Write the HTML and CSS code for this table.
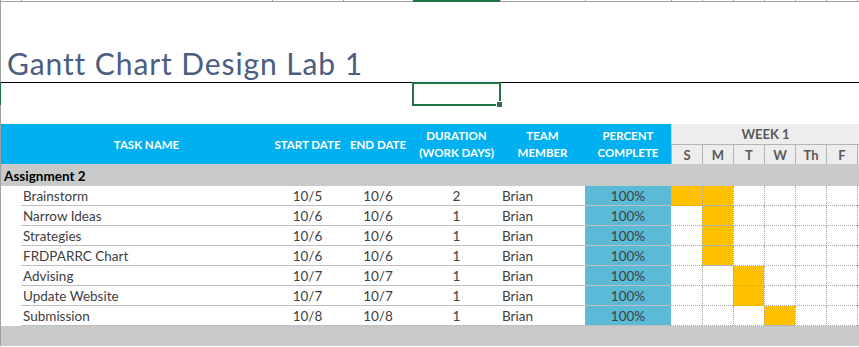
FILE: index.html
```html
<!DOCTYPE html>
<html>
<head>
<meta charset="utf-8">
<link rel="stylesheet" href="styles.css">
</head>
<body>
<div class="sheet">
  <div class="row colhdr grid">
    <span class="ch ch-first"></span><span class="ch"></span><span class="ch"></span><span class="ch"></span><span class="ch ch-sel"></span><span class="ch"></span><span class="ch"></span><span class="ch"></span><span class="ch"></span><span class="ch"></span><span class="ch"></span><span class="ch"></span><span class="ch"></span><span class="ch"></span>
  </div>
  <div class="row title-row"><h1 class="title">Gantt Chart Design Lab 1</h1></div>
  <div class="row sel-row"><div class="selection"><span class="handle"></span></div></div>
  <div class="row blank-row"></div>
  <div class="row table grid">
    <div class="th"></div>
    <div class="th">TASK NAME</div>
    <div class="th">START DATE</div>
    <div class="th">END DATE</div>
    <div class="th">DURATION<br>(WORK DAYS)</div>
    <div class="th">TEAM<br>MEMBER</div>
    <div class="th">PERCENT<br>COMPLETE</div>
    <div class="week">WEEK 1</div>
    <div class="day">S</div><div class="day">M</div><div class="day">T</div><div class="day">W</div><div class="day">Th</div><div class="day">F</div><div class="day"></div>

    <div class="group">Assignment 2</div>

    <div class="td a"></div><div class="td name">Brainstorm</div><div class="td c">10/5</div><div class="td c">10/6</div><div class="td c">2</div><div class="td member">Brian</div><div class="td c pct">100%</div>
    <div class="g s on"></div><div class="g on"></div><div class="g"></div><div class="g"></div><div class="g"></div><div class="g"></div><div class="g"></div>

    <div class="td a"></div><div class="td name">Narrow Ideas</div><div class="td c">10/6</div><div class="td c">10/6</div><div class="td c">1</div><div class="td member">Brian</div><div class="td c pct">100%</div>
    <div class="g s"></div><div class="g on"></div><div class="g"></div><div class="g"></div><div class="g"></div><div class="g"></div><div class="g"></div>

    <div class="td a"></div><div class="td name">Strategies</div><div class="td c">10/6</div><div class="td c">10/6</div><div class="td c">1</div><div class="td member">Brian</div><div class="td c pct">100%</div>
    <div class="g s"></div><div class="g on"></div><div class="g"></div><div class="g"></div><div class="g"></div><div class="g"></div><div class="g"></div>

    <div class="td a"></div><div class="td name">FRDPARRC Chart</div><div class="td c">10/6</div><div class="td c">10/6</div><div class="td c">1</div><div class="td member">Brian</div><div class="td c pct">100%</div>
    <div class="g s"></div><div class="g on"></div><div class="g"></div><div class="g"></div><div class="g"></div><div class="g"></div><div class="g"></div>

    <div class="td a"></div><div class="td name">Advising</div><div class="td c">10/7</div><div class="td c">10/7</div><div class="td c">1</div><div class="td member">Brian</div><div class="td c pct">100%</div>
    <div class="g s"></div><div class="g"></div><div class="g on"></div><div class="g"></div><div class="g"></div><div class="g"></div><div class="g"></div>

    <div class="td a"></div><div class="td name">Update Website</div><div class="td c">10/7</div><div class="td c">10/7</div><div class="td c">1</div><div class="td member">Brian</div><div class="td c pct">100%</div>
    <div class="g s"></div><div class="g"></div><div class="g on"></div><div class="g"></div><div class="g"></div><div class="g"></div><div class="g"></div>

    <div class="td a"></div><div class="td name">Submission</div><div class="td c">10/8</div><div class="td c">10/8</div><div class="td c">1</div><div class="td member">Brian</div><div class="td c pct">100%</div>
    <div class="g s"></div><div class="g"></div><div class="g"></div><div class="g on"></div><div class="g"></div><div class="g"></div><div class="g"></div>
  </div>
  <div class="row footer-row"></div>
</div>
</body>
</html>
```
FILE: styles.css
```css
html, body {
  margin: 0;
  padding: 0;
  background: #ffffff;
}

.sheet {
  width: 859px;
  height: 347px;
  overflow: hidden;
  font-family: Lato, "Open Sans", sans-serif;
}

.row {
  border-left: 1px solid #a0a0a0;
}

.grid {
  display: grid;
  grid-template-columns: 20px 251px 71px 70px 87px 85px 86px repeat(6, 31px) 1fr;
}

/* column header strip */
.colhdr {
  height: 2px;
}
.ch {
  height: 2px;
  box-sizing: border-box;
  border-bottom: 1px solid #9f9f9f;
  border-left: 1px solid #9f9f9f;
}
.ch-first {
  border-left: 0;
}
.ch-sel {
  border: 0;
  background: #217346;
}

/* title */
.title-row {
  height: 80px;
  border-bottom: 1px solid #000000;
  display: flex;
  align-items: flex-end;
  padding-left: 6px;
}
.title {
  margin: 0;
  padding-bottom: 1px;
  font-family: Lato, "Open Sans", sans-serif;
  font-weight: 400;
  font-size: 30px;
  letter-spacing: 0.9px;
  line-height: 36px;
  color: #4b5d80;
}

/* selected row */
.sel-row {
  height: 23px;
  border-left-color: #217346;
}
.selection {
  position: relative;
  margin-left: 411px;
  margin-top: -1px;
  width: 89px;
  height: 24px;
  box-sizing: border-box;
  border: 2px solid #217346;
}
.handle {
  position: absolute;
  right: -4px;
  bottom: -4px;
  width: 7px;
  height: 7px;
  box-sizing: border-box;
  background: #217346;
  border: 1px solid #ffffff;
}

.blank-row {
  height: 19px;
}

/* table header */
.th {
  grid-row: span 2;
  background: #00b0f0;
  color: #ffffff;
  font-weight: 700;
  font-size: 11.5px;
  line-height: 17px;
  text-align: center;
  display: flex;
  align-items: center;
  justify-content: center;
  white-space: nowrap;
}
.week {
  grid-column: 8 / -1;
  height: 21px;
  box-sizing: border-box;
  background: #ededed;
  border-bottom: 1px solid #b4b4b4;
  border-left: 1px solid #d4d4d4;
  color: #595959;
  font-weight: 700;
  font-size: 13px;
  line-height: 20px;
  text-align: center;
}
.day {
  height: 19px;
  box-sizing: border-box;
  background: #ededed;
  border-left: 1px solid #b4b4b4;
  color: #595959;
  font-weight: 700;
  font-size: 13px;
  line-height: 21px;
  text-align: center;
}

/* group row */
.group {
  grid-column: 1 / -1;
  height: 22px;
  box-sizing: border-box;
  padding-top: 2px;
  background: #c9c9c9;
  color: #000000;
  font-weight: 700;
  font-size: 13.5px;
  line-height: 20px;
  padding-left: 3px;
}

/* data rows */
.td {
  height: 20px;
  box-sizing: border-box;
  border-bottom: 1px solid #bfbfbf;
  padding-top: 2px;
  font-size: 13.5px;
  line-height: 17px;
  color: #404040;
  white-space: nowrap;
}
.td.a {
  border-bottom: 0;
}
.name {
  padding-left: 2px;
}
.member {
  padding-left: 2px;
}
.c {
  text-align: center;
}
.pct {
  background: #5bbad5;
}
.g {
  height: 20px;
  box-sizing: border-box;
  border-bottom: 1px dotted #a6a6a6;
  border-left: 1px dotted #a6a6a6;
}
.g.s {
  border-left: 0;
}
.g.on {
  background: #ffc000;
}

.footer-row {
  height: 20px;
  background: #c9c9c9;
}
```
